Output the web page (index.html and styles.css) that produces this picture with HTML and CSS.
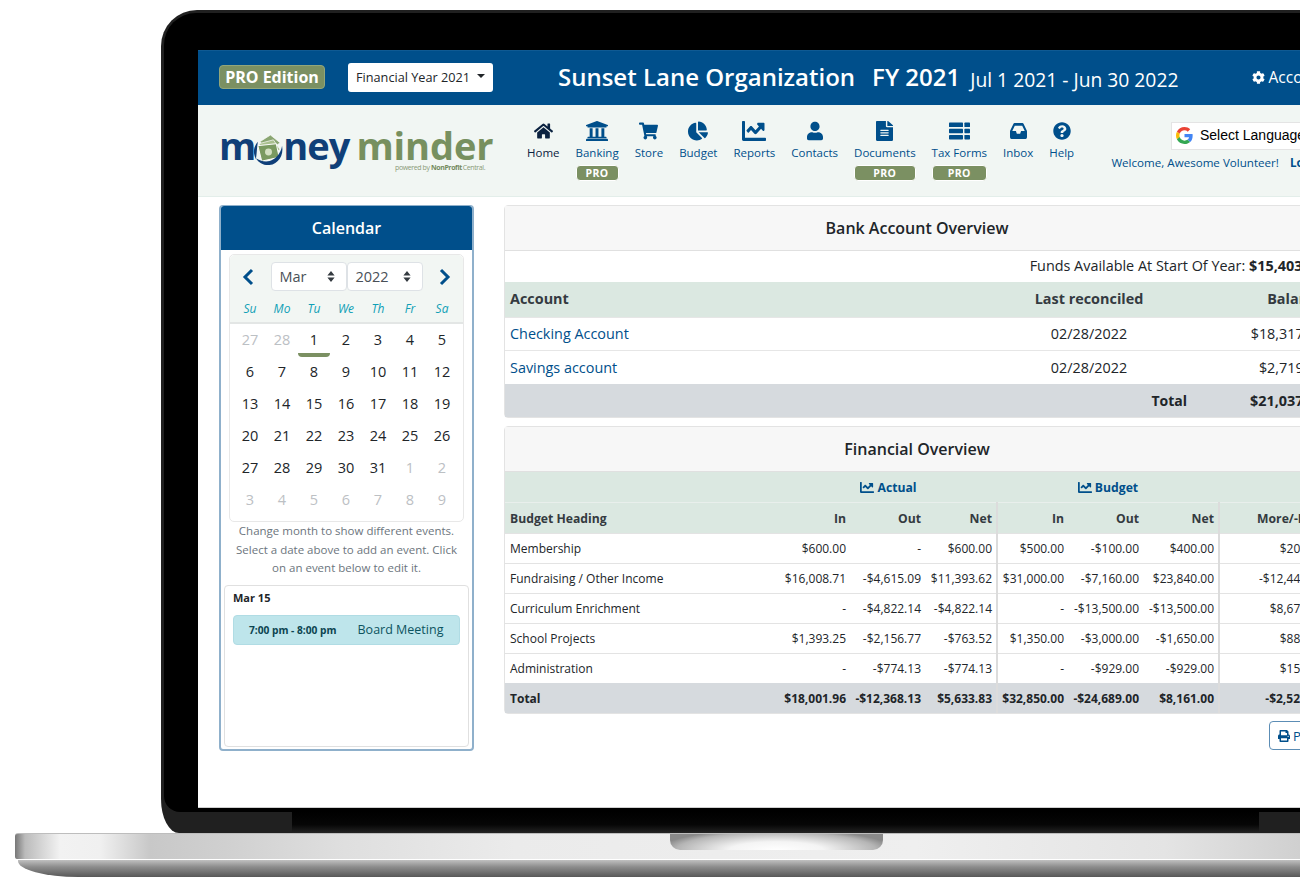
FILE: index.html
```html
<!DOCTYPE html>
<html lang="en">
<head>
<meta charset="utf-8">
<title>Money Minder</title>
<link rel="stylesheet" href="styles.css">
</head>
<body>
<svg class="sprite" aria-hidden="true">
  <symbol id="i-home" viewBox="0 0 576 512"><path d="M280.37 148.26L96 300.11V464a16 16 0 0 0 16 16l112.06-.29a16 16 0 0 0 15.92-16V368a16 16 0 0 1 16-16h64a16 16 0 0 1 16 16v95.64a16 16 0 0 0 16 16.05L464 480a16 16 0 0 0 16-16V300L295.67 148.26a12.19 12.19 0 0 0-15.3 0zM571.6 251.47L488 182.56V44.05a12 12 0 0 0-12-12h-56a12 12 0 0 0-12 12v72.61L318.47 43a48 48 0 0 0-61 0L4.34 251.47a12 12 0 0 0-1.6 16.9l25.5 31A12 12 0 0 0 45.15 301l235.22-193.74a12.19 12.19 0 0 1 15.3 0L530.9 301a12 12 0 0 0 16.9-1.6l25.5-31a12 12 0 0 0-1.7-16.93z"/></symbol>
  <symbol id="i-bank" viewBox="16 32 480 448" preserveAspectRatio="none"><path d="M496 128v16a8 8 0 0 1-8 8h-24v12c0 6.627-5.373 12-12 12H60c-6.627 0-12-5.373-12-12v-12H24a8 8 0 0 1-8-8v-16a8 8 0 0 1 4.941-7.392l232-88a7.996 7.996 0 0 1 6.118 0l232 88A8 8 0 0 1 496 128zm-24 304H40c-13.255 0-24 10.745-24 24v16a8 8 0 0 0 8 8h464a8 8 0 0 0 8-8v-16c0-13.255-10.745-24-24-24zM96 192v192H60c-6.627 0-12 5.373-12 12v20h416v-20c0-6.627-5.373-12-12-12h-36V192h-64v192h-64V192h-64v192h-64V192H96z"/></symbol>
  <symbol id="i-cart" viewBox="0 0 576 512"><path d="M528.12 301.319l47.273-208C578.806 78.301 567.391 64 551.99 64H159.208l-9.166-44.81C147.758 8.021 137.93 0 126.529 0H24C10.745 0 0 10.745 0 24v16c0 13.255 10.745 24 24 24h69.883l70.248 343.435C147.325 417.1 136 435.222 136 456c0 30.928 25.072 56 56 56s56-25.072 56-56c0-15.674-6.447-29.835-16.824-40h209.647C430.447 426.165 424 440.326 424 456c0 30.928 25.072 56 56 56s56-25.072 56-56c0-22.172-12.888-41.332-31.579-50.405l5.517-24.276c3.413-15.018-8.002-29.319-23.403-29.319H218.117l-6.545-32h293.145c11.206 0 20.92-7.754 23.403-18.681z"/></symbol>
  <symbol id="i-pie" viewBox="0 0 544 512"><path d="M527.79 288H290.5l158.03 158.03c6.04 6.04 15.98 6.53 22.19.68 38.7-36.46 65.32-85.61 73.13-140.86 1.34-9.46-6.51-17.85-16.06-17.85zm-15.83-64.8C503.72 103.74 408.26 8.28 288.8.04 279.68-.59 272 7.1 272 16.24V240h223.77c9.14 0 16.82-7.68 16.19-16.8zM224 288V50.71c0-9.55-8.39-17.4-17.84-16.06C86.99 51.49-4.1 155.6.14 280.37 4.5 408.51 114.83 513.59 243.03 511.98c50.4-.63 96.97-16.87 135.26-44.03 7.9-5.6 8.42-17.23 1.57-24.08L224 288z"/></symbol>
  <symbol id="i-line" viewBox="0 64 512 384" preserveAspectRatio="none"><path d="M496 384H64V80c0-8.84-7.16-16-16-16H16C7.16 64 0 71.16 0 80v336c0 17.67 14.33 32 32 32h464c8.84 0 16-7.16 16-16v-32c0-8.84-7.16-16-16-16zM464 96H345.94c-21.38 0-32.09 25.85-16.97 40.97l32.4 32.4L288 242.75l-73.37-73.37c-12.5-12.5-32.76-12.5-45.25 0l-68.69 68.69c-6.25 6.25-6.25 16.38 0 22.63l22.62 22.62c6.25 6.25 16.38 6.25 22.63 0L192 237.25l73.37 73.37c12.5 12.5 32.76 12.5 45.25 0l96-96 32.4 32.4c15.12 15.12 40.97 4.41 40.97-16.97V112c.01-8.84-7.15-16-15.99-16z"/></symbol>
  <symbol id="i-user" viewBox="0 0 448 512"><path d="M224 256c70.7 0 128-57.3 128-128S294.7 0 224 0 96 57.3 96 128s57.3 128 128 128zm89.6 32h-16.7c-22.2 10.2-46.9 16-72.9 16s-50.6-5.8-72.9-16h-16.7C60.2 288 0 348.2 0 422.4V464c0 26.5 21.5 48 48 48h352c26.5 0 48-21.5 48-48v-41.6c0-74.2-60.2-134.4-134.4-134.4z"/></symbol>
  <symbol id="i-file" viewBox="0 0 384 512" preserveAspectRatio="none"><path d="M224 136V0H24C10.7 0 0 10.7 0 24v464c0 13.3 10.7 24 24 24h336c13.3 0 24-10.7 24-24V160H248c-13.2 0-24-10.8-24-24zm64 236c0 6.6-5.4 12-12 12H108c-6.6 0-12-5.4-12-12v-8c0-6.6 5.4-12 12-12h168c6.6 0 12 5.4 12 12v8zm0-64c0 6.6-5.4 12-12 12H108c-6.6 0-12-5.4-12-12v-8c0-6.6 5.4-12 12-12h168c6.6 0 12 5.4 12 12v8zm0-72v8c0 6.6-5.4 12-12 12H108c-6.6 0-12-5.4-12-12v-8c0-6.6 5.4-12 12-12h168c6.6 0 12 5.4 12 12zm96-114.1v6.1H256V0h6.1c6.4 0 12.5 2.5 17 7l97.9 98c4.5 4.5 7 10.6 7 16.9z"/></symbol>
  <symbol id="i-forms" viewBox="0 0 21 17"><rect x="0" y="0" width="14" height="4.600" rx=".7"/><rect x="15.400" y="0" width="5.600" height="4.600" rx=".7"/><rect x="0" y="6.200" width="14" height="4.600" rx=".7"/><rect x="15.400" y="6.200" width="5.600" height="4.600" rx=".7"/><rect x="0" y="12.400" width="14" height="4.600" rx=".7"/><rect x="15.400" y="12.400" width="5.600" height="4.600" rx=".7"/></symbol>
  <symbol id="i-inbox" viewBox="0 64 576 384" preserveAspectRatio="none"><path d="M567.938 243.908L462.25 85.374A48.003 48.003 0 0 0 422.311 64H153.689a48 48 0 0 0-39.938 21.374L8.062 243.908A47.994 47.994 0 0 0 0 270.533V400c0 26.51 21.49 48 48 48h480c26.51 0 48-21.49 48-48V270.533a47.994 47.994 0 0 0-8.062-26.625zM162.252 128h251.497l85.333 128H376l-32 64H232l-32-64H76.918l85.334-128z"/></symbol>
  <symbol id="i-help" viewBox="0 0 512 512"><path d="M504 256c0 136.997-111.043 248-248 248S8 392.997 8 256C8 119.083 119.043 8 256 8s248 111.083 248 248zM262.655 90c-54.497 0-89.255 22.957-116.549 63.758-3.536 5.286-2.353 12.415 2.715 16.258l34.699 26.31c5.205 3.947 12.621 3.008 16.665-2.122 17.864-22.658 30.113-35.797 57.303-35.797 20.429 0 45.698 13.148 45.698 32.958 0 14.976-12.363 22.667-32.534 33.976C247.128 238.528 216 254.941 216 296v4c0 6.627 5.373 12 12 12h56c6.627 0 12-5.373 12-12v-1.333c0-28.462 83.186-29.647 83.186-106.667 0-58.002-60.165-102-116.531-102zM256 338c-25.365 0-46 20.635-46 46 0 25.364 20.635 46 46 46s46-20.636 46-46c0-25.365-20.635-46-46-46z"/></symbol>
  <symbol id="i-cog" viewBox="0 0 512 512"><path d="M487.4 315.7l-42.6-24.6c4.3-23.2 4.3-47 0-70.2l42.6-24.6c4.9-2.8 7.1-8.6 5.5-14-11.1-35.6-30-67.8-54.7-94.6-3.8-4.1-10-5.1-14.8-2.3L380.8 110c-17.9-15.4-38.5-27.3-60.8-35.1V25.8c0-5.6-3.9-10.5-9.4-11.7-36.7-8.2-74.3-7.8-109.2 0-5.5 1.2-9.4 6.1-9.4 11.7V75c-22.2 7.9-42.8 19.8-60.8 35.1L88.7 85.5c-4.9-2.8-11-1.9-14.8 2.3-24.7 26.7-43.6 58.9-54.7 94.6-1.7 5.4.6 11.2 5.5 14L67.3 221c-4.3 23.2-4.3 47 0 70.2l-42.6 24.6c-4.9 2.8-7.1 8.6-5.5 14 11.1 35.6 30 67.8 54.7 94.6 3.8 4.1 10 5.1 14.8 2.3l42.6-24.6c17.9 15.4 38.5 27.3 60.8 35.1v49.2c0 5.6 3.9 10.5 9.4 11.7 36.7 8.2 74.3 7.8 109.2 0 5.5-1.2 9.4-6.1 9.4-11.7v-49.2c22.2-7.9 42.8-19.8 60.8-35.1l42.6 24.6c4.9 2.8 11 1.9 14.8-2.3 24.7-26.7 43.6-58.9 54.7-94.6 1.5-5.5-.7-11.3-5.6-14.1zM256 336c-44.1 0-80-35.9-80-80s35.9-80 80-80 80 35.9 80 80-35.9 80-80 80z"/></symbol>
  <symbol id="i-print" viewBox="0 0 512 512"><path d="M448 192V77.25c0-8.49-3.37-16.62-9.37-22.63L393.37 9.37c-6-6-14.14-9.37-22.63-9.37H96C78.33 0 64 14.33 64 32v160c-35.35 0-64 28.65-64 64v112c0 8.84 7.16 16 16 16h48v96c0 17.67 14.33 32 32 32h320c17.67 0 32-14.33 32-32v-96h48c8.84 0 16-7.16 16-16V256c0-35.35-28.65-64-64-64zm-64 256H128v-96h256v96zm0-224H128V64h192v48c0 8.84 7.16 16 16 16h48v96zm48 72c-13.25 0-24-10.75-24-24 0-13.26 10.75-24 24-24s24 10.74 24 24c0 13.25-10.75 24-24 24z"/></symbol>
  <symbol id="i-sort" viewBox="0 0 10 14"><path d="M5 0l4.600 5.600H.4zM5 14L.4 8.400h9.200z"/></symbol>
</svg>

<div class="stage">
  <div class="lid">
    <div class="bezel">
      <div class="screen">
        <header class="topbar">
          <span class="edition">PRO Edition</span>
          <button class="year-btn">Financial Year 2021<span class="caret"></span></button>
          <h1 class="org">Sunset Lane Organization<span class="org-fy">FY 2021</span><span class="org-dates">Jul 1 2021 - Jun 30 2022</span></h1>
          <a class="account"><svg class="ic-cog"><use href="#i-cog"/></svg>Account</a>
        </header>

        <nav class="navbar">
          <div class="logo">
            <div class="logo-word"><span class="logo-blue">m</span><svg class="logo-o" viewBox="0 0 32 34"><path d="M7 8L18 1l10 8-11 8z" fill="#8aa672" stroke="#fff" stroke-width=".7"/><path d="M6 10l15-4 7 10-14 7z" fill="#a9c08e" stroke="#fff" stroke-width=".7"/><path d="M5 12l19-2 3 14-18 4z" fill="#7a9a60" stroke="#fff" stroke-width="1"/><circle cx="16" cy="18.500" r="3.600" fill="#d3e0c2"/><path d="M30 12c2 10-4 19-13 20-6 .5-11-2-14-7 5 3 12 5 18 1 5-3 8-8 9-14z" fill="#0f3f78"/><path d="M3 26C0 20 0 14 5 8c-1 6-1 12-2 18z" fill="#0f3f78"/></svg><span class="logo-blue">ney</span><span class="logo-green">minder</span></div>
            <div class="logo-sub">powered by <b>NonProfit</b>Central.</div>
          </div>
          <ul class="navlinks">
            <li class="navitem active"><svg class="nav-ic w-home"><use href="#i-home"/></svg><span>Home</span></li>
            <li class="navitem"><svg class="nav-ic w-bank"><use href="#i-bank"/></svg><span>Banking</span><em class="pro">PRO</em></li>
            <li class="navitem"><svg class="nav-ic w-cart"><use href="#i-cart"/></svg><span>Store</span></li>
            <li class="navitem"><svg class="nav-ic w-pie"><use href="#i-pie"/></svg><span>Budget</span></li>
            <li class="navitem"><svg class="nav-ic w-line"><use href="#i-line"/></svg><span>Reports</span></li>
            <li class="navitem"><svg class="nav-ic w-user"><use href="#i-user"/></svg><span>Contacts</span></li>
            <li class="navitem"><svg class="nav-ic w-file"><use href="#i-file"/></svg><span>Documents</span><em class="pro">PRO</em></li>
            <li class="navitem"><svg class="nav-ic w-forms"><use href="#i-forms"/></svg><span>Tax Forms</span><em class="pro">PRO</em></li>
            <li class="navitem"><svg class="nav-ic w-inbox"><use href="#i-inbox"/></svg><span>Inbox</span></li>
            <li class="navitem"><svg class="nav-ic w-help"><use href="#i-help"/></svg><span>Help</span></li>
          </ul>
          <div class="navright">
            <div class="translate">
              <svg class="g-logo" viewBox="0 0 48 48"><path fill="#EA4335" d="M24 9.500c3.500 0 6.700 1.200 9.200 3.600l6.900-6.900C35.900 2.400 30.500 0 24 0 14.600 0 6.500 5.400 2.600 13.200l8 6.200C12.400 13.700 17.700 9.500 24 9.500z"/><path fill="#4285F4" d="M47 24.500c0-1.600-.2-3.100-.4-4.500H24v9h12.900c-.6 3-2.200 5.500-4.700 7.200l7.700 6C44.400 38.600 47 32.100 47 24.500z"/><path fill="#FBBC05" d="M10.500 28.600c-.5-1.400-.8-3-.8-4.600s.3-3.200.8-4.600l-8-6.200C.9 16.500 0 20.100 0 24s.9 7.500 2.600 10.800l7.900-6.200z"/><path fill="#34A853" d="M24 48c6.500 0 11.900-2.100 15.900-5.800l-7.700-6c-2.200 1.500-4.900 2.300-8.200 2.300-6.300 0-11.600-4.200-13.500-10l-8 6.200C6.500 42.600 14.600 48 24 48z"/></svg>
              <span>Select Language</span>
            </div>
            <div class="welcome">Welcome, Awesome Volunteer!<a class="logout">Logout</a></div>
          </div>
        </nav>

        <main class="content">
          <aside class="cal-card">
            <h2 class="cal-head">Calendar</h2>
            <div class="cal-widget">
              <div class="cal-top">
                <div class="cal-controls">
                  <svg class="chev" viewBox="0 0 12 18"><path d="M10 2L3 9l7 7"/></svg>
                  <div class="cal-selects">
                    <span class="cal-sel">Mar<svg class="sort"><use href="#i-sort"/></svg></span>
                    <span class="cal-sel">2022<svg class="sort"><use href="#i-sort"/></svg></span>
                  </div>
                  <svg class="chev" viewBox="0 0 12 18"><path d="M2 2l7 7-7 7"/></svg>
                </div>
                <div class="cal-dow"><span>Su</span><span>Mo</span><span>Tu</span><span>We</span><span>Th</span><span>Fr</span><span>Sa</span></div>
              </div>
              <div class="cal-days">
                <span class="off">27</span><span class="off">28</span><span class="today">1</span><span>2</span><span>3</span><span>4</span><span>5</span>
                <span>6</span><span>7</span><span>8</span><span>9</span><span>10</span><span>11</span><span>12</span>
                <span>13</span><span>14</span><span>15</span><span>16</span><span>17</span><span>18</span><span>19</span>
                <span>20</span><span>21</span><span>22</span><span>23</span><span>24</span><span>25</span><span>26</span>
                <span>27</span><span>28</span><span>29</span><span>30</span><span>31</span><span class="off">1</span><span class="off">2</span>
                <span class="off">3</span><span class="off">4</span><span class="off">5</span><span class="off">6</span><span class="off">7</span><span class="off">8</span><span class="off">9</span>
              </div>
            </div>
            <p class="cal-help">Change month to show different events. Select a date above to add an event. Click on an event below to edit it.</p>
            <div class="events">
              <div class="ev-date">Mar 15</div>
              <div class="ev-pill"><b>7:00 pm - 8:00 pm</b><span>Board Meeting</span></div>
            </div>
          </aside>

          <section class="right-col">
            <div class="card">
              <h2 class="card-title">Bank Account Overview</h2>
              <div class="funds">Funds Available At Start Of Year: <b>$15,403.73</b></div>
              <table class="bank">
                <colgroup><col class="b1"><col class="b2"><col class="b3"></colgroup>
                <thead><tr><th class="l">Account</th><th class="c">Last reconciled</th><th class="r">Balance</th></tr></thead>
                <tbody>
                  <tr><td class="l"><a class="acct">Checking Account</a></td><td class="c">02/28/2022</td><td class="r">$18,317.71</td></tr>
                  <tr><td class="l"><a class="acct">Savings account</a></td><td class="c">02/28/2022</td><td class="r">$2,719.85</td></tr>
                </tbody>
                <tfoot><tr><td></td><td class="r tot-l">Total</td><td class="r">$21,037.56</td></tr></tfoot>
              </table>
            </div>

            <div class="card card-fin">
              <h2 class="card-title">Financial Overview</h2>
              <table class="fin">
                <colgroup><col class="f0"><col class="f1"><col class="f2"><col class="f3"><col class="f4"><col class="f5"><col class="f6"><col class="f7"></colgroup>
                <thead>
                  <tr class="group"><th></th><th colspan="3"><svg class="ic-line"><use href="#i-line"/></svg>Actual</th><th colspan="3"><svg class="ic-line"><use href="#i-line"/></svg>Budget</th><th></th></tr>
                  <tr class="heads"><th class="l">Budget Heading</th><th>In</th><th>Out</th><th class="sep">Net</th><th>In</th><th>Out</th><th class="sep">Net</th><th>More/-Less</th></tr>
                </thead>
                <tbody>
                  <tr><td class="l">Membership</td><td>$600.00</td><td>-</td><td class="sep">$600.00</td><td>$500.00</td><td>-$100.00</td><td class="sep">$400.00</td><td>$200.00</td></tr>
                  <tr><td class="l">Fundraising / Other Income</td><td>$16,008.71</td><td>-$4,615.09</td><td class="sep">$11,393.62</td><td>$31,000.00</td><td>-$7,160.00</td><td class="sep">$23,840.00</td><td>-$12,446.38</td></tr>
                  <tr><td class="l">Curriculum Enrichment</td><td>-</td><td>-$4,822.14</td><td class="sep">-$4,822.14</td><td>-</td><td>-$13,500.00</td><td class="sep">-$13,500.00</td><td>$8,677.86</td></tr>
                  <tr><td class="l">School Projects</td><td>$1,393.25</td><td>-$2,156.77</td><td class="sep">-$763.52</td><td>$1,350.00</td><td>-$3,000.00</td><td class="sep">-$1,650.00</td><td>$886.48</td></tr>
                  <tr><td class="l">Administration</td><td>-</td><td>-$774.13</td><td class="sep">-$774.13</td><td>-</td><td>-$929.00</td><td class="sep">-$929.00</td><td>$154.87</td></tr>
                </tbody>
                <tfoot><tr><td class="l">Total</td><td>$18,001.96</td><td>-$12,368.13</td><td class="sep">$5,633.83</td><td>$32,850.00</td><td>-$24,689.00</td><td class="sep">$8,161.00</td><td>-$2,527.17</td></tr></tfoot>
              </table>
            </div>

            <div class="actions"><button class="print-btn"><svg class="ic-print"><use href="#i-print"/></svg>Print</button></div>
          </section>
        </main>
      </div>
    </div>
    <div class="hinge"></div>
  </div>
  <div class="base">
    <div class="base-top"><div class="notch"></div></div>
    <div class="base-low"></div>
  </div>
</div>
</body>
</html>
```

FILE: styles.css
```css
* { box-sizing: border-box; }
html, body { margin: 0; padding: 0; background: #fff; }
body { font-family: "Open Sans", "Noto Sans", sans-serif; color: #212529; }
.sprite { display: none; }
h1, h2, p, ul { margin: 0; padding: 0; }

.stage { width: 1300px; height: 896px; overflow: hidden; padding-top: 10px; }

/* laptop */
.lid { margin-left: 161px; width: 1300px; height: 823px; background: #202020; border-radius: 36px 0 0 18px / 36px 0 0 34px; padding: 3px 0 0 3px; }
.bezel { width: 100%; height: 799px; background: #000; border-radius: 32px 0 0 16px; padding: 37px 0 0 34px; }
.screen { width: 1153px; height: 758px; background: #fff; overflow: hidden; border-bottom: 1px solid #cfcfcf; }
.hinge { margin-left: 128px; width: 967px; height: 21px; background: linear-gradient(#000, #060606 60%, #232323); }

.base { margin-left: 15px; width: 1400px; }
.base-top { height: 27px; border-top: 1px solid #bdbdbd; border-radius: 3px 0 0 3px; background: linear-gradient(90deg, #777 0, #bbb 10px, #f2f2f2 45px, #f0f0f0 85px, #c8c8c8 135px, #d0d0d0 210px, #dfdfdf 330px, #ebebeb 500px, #efefef 900px, #e4e4e4 1150px, #d0d0d0 1285px); border-bottom: 1px solid #fff; }
.notch { margin-left: 655px; width: 213px; height: 16px; border-radius: 0 0 10px 10px; background: radial-gradient(ellipse 55% 130% at 50% 100%, #fff 0, #f4f4f4 40%, #b5b5b5 85%, #8a8a8a 100%); }
.base-low { margin-left: 3px; height: 17px; border-radius: 0 0 0 60px / 0 0 0 16px; background: linear-gradient(#c0c0c0, #8d8d8d 40%, #585858); }

/* top bar */
.topbar { height: 55px; background: #004f8b; padding: 0 21px 2px; display: flex; align-items: center; color: #fff; border-top: 1px solid #0f5a93; }
.edition { flex: none; width: 106px; height: 24px; background: #7b9062; border: 1px solid #92a67a; border-radius: 4px; font-size: 16px; font-weight: 700; line-height: 22px; text-align: center; color: #fff; }
.year-btn { flex: none; margin-left: 23px; width: 145px; height: 29px; background: #fff; border: 0; border-radius: 3px; font: 400 12.700px "Open Sans", sans-serif; color: #212529; padding: 0; display: flex; align-items: center; justify-content: center; }
.caret { margin-left: 7px; width: 0; height: 0; border: 4px solid transparent; border-top-color: #212529; border-bottom: 0; margin-top: -2px; }
.org { flex: none; margin-left: 65px; font-size: 24px; font-weight: 600; white-space: nowrap; line-height: 32px; display: flex; align-items: center; }
.org-fy { margin-left: 17px; }
.org-dates { margin-left: 10px; margin-top: 6px; font-size: 19.300px; font-weight: 400; }
.account { margin-left: auto; padding-right: 3px; font-size: 15.500px; display: flex; align-items: center; color: #fff; }
.ic-cog { width: 13px; height: 13px; fill: #fff; margin-right: 3px; }

/* nav */
.navbar { height: 92px; background: #f1f6f3; border-bottom: 1px solid #e3eeea; padding: 0 21px; display: flex; }
.logo { flex: none; width: 308px; padding-top: 18px; }
.logo-word { display: flex; align-items: baseline; font-size: 38px; line-height: 44px; font-weight: 700; height: 41px; white-space: nowrap; }
.logo-blue { color: #0f3f78; letter-spacing: -1px; }
.logo-green { color: #77905f; margin-left: 7px; letter-spacing: -.1px; font-weight: 700; }
.logo-o { width: 31px; height: 33px; margin: 0 -1px -3px -2px; align-self: flex-end; }
.logo-sub { margin-left: 176px; margin-top: -1px; font-size: 7px; line-height: 10px; color: #8a9a78; white-space: nowrap; letter-spacing: -.4px; }
.logo-sub b { color: #748a5e; margin-right: 1px; }
.navlinks { flex: none; list-style: none; display: flex; gap: 16px; padding-top: 16px; }
.navitem { display: flex; flex-direction: column; align-items: stretch; text-align: center; font-size: 11.500px; line-height: 16px; color: #004f8b; white-space: nowrap; }
.navitem.active { color: #0b2240; }
.nav-ic { display: block; height: 20px; fill: currentColor; margin: 0 auto 4px; }
.w-home { width: 19px; } .w-bank { width: 22px; } .w-cart { width: 19px; } .w-pie { width: 20px; } .w-line { width: 24px; } .w-user { width: 16px; } .w-file { width: 17px; } .w-forms { width: 21px; } .w-help { width: 18px; }
.w-inbox { width: 17px; height: 16px; margin-top: 2px; margin-bottom: 6px; }
.pro { margin-top: 4px; height: 16px; background: #7b9062; border: 1px solid #fff; border-radius: 4px; font-style: normal; font-size: 10.500px; font-weight: 700; line-height: 14px; letter-spacing: .4px; color: #fff; }
.navright { margin-left: auto; display: flex; flex-direction: column; align-items: flex-end; padding-top: 17px; }
.translate { width: 159px; height: 28px; background: #fff; border: 1px solid #e4e4e4; display: flex; align-items: center; padding: 0 0 2px 4px; font: 400 14px "Liberation Sans", Arial, sans-serif; color: #000; white-space: nowrap; }
.g-logo { flex: none; width: 17px; height: 17px; margin-right: 7px; }
.welcome { margin-top: 5px; font-size: 11.600px; line-height: 16px; color: #004f8b; white-space: nowrap; }
.logout { margin-left: 11px; font-weight: 700; }

/* main */
.content { display: flex; gap: 30px; padding: 8px 21px 0; align-items: flex-start; }

.cal-card { flex: none; width: 255px; height: 546px; border-style: solid; border-width: 1px 2px 2px; border-color: #8fb0cb; border-radius: 4px; padding: 0 3px; }
.cal-head { margin: 0 -3px; height: 44px; background: #004f8b; color: #fff; font-size: 16px; font-weight: 600; line-height: 44px; text-align: center; border-radius: 3px 3px 0 0; }
.cal-widget { margin: 4px 5px 0; height: 268px; border: 1px solid #e8e8e8; border-radius: 5px; background: #fff; }
.cal-top { height: 69px; background: #f2f6f3; border-bottom: 2px solid #e3e6e5; border-radius: 5px 5px 0 0; padding-top: 7px; }
.cal-controls { display: flex; align-items: center; justify-content: space-between; padding: 0 12px; height: 29px; }
.chev { width: 12px; height: 18px; fill: none; stroke: #004f8b; stroke-width: 3; }
.cal-selects { display: flex; }
.cal-sel { width: 76px; height: 29px; background: #fff; border: 1px solid #dee2e6; border-radius: 4px; font-size: 14.500px; line-height: 27px; color: #495057; padding-left: 8px; display: flex; justify-content: space-between; align-items: center; padding-right: 11px; }
.sort { width: 8px; height: 11px; fill: #343a40; }
.cal-dow { display: grid; grid-template-columns: repeat(7, 32px); padding: 9px 0 0 4px; font-size: 12px; line-height: 18px; font-style: italic; color: #0f9fb6; text-align: center; }
.cal-days { display: grid; grid-template-columns: repeat(7, 32px); grid-auto-rows: 32px; padding: 0 0 0 4px; font-size: 14.500px; line-height: 32px; text-align: center; color: #212529; }
.off { color: #bcc0c4; }
.today { position: relative; }
.today::after { content: ""; position: absolute; left: 0; right: 0; bottom: -1px; height: 4px; background: #7b9062; border-radius: 0 0 5px 5px; }
.cal-help { margin: 0 4px; font-size: 11.500px; line-height: 18.500px; text-align: center; color: #6c757d; }
.events { margin-top: 7px; height: 162px; border: 1px solid #e0e0e0; border-radius: 4px; padding: 5px 8px; }
.ev-date { font-size: 11px; font-weight: 700; line-height: 13px; color: #212529; }
.ev-pill { margin-top: 11px; height: 30px; background: #bee5eb; border: 1px solid #b0dce4; border-radius: 4px; display: flex; align-items: center; color: #0c5460; }
.ev-pill b { margin-left: 15px; font-size: 10.200px; color: #0c4450; }
.ev-pill span { margin-left: 21px; font-size: 12.500px; }

.right-col { flex: none; width: 826px; }
.card { border: 1px solid #e3e3e3; border-radius: 4px 0 0 4px; }
.card-fin { margin-top: 8px; }
.card-title { height: 45px; background: #f7f7f7; border-bottom: 1px solid #e0e0e0; font-size: 16px; font-weight: 600; line-height: 45px; text-align: center; color: #212529; }
.funds { height: 31px; padding-right: 6px; text-align: right; font-size: 14.400px; line-height: 30px; color: #212529; white-space: nowrap; }
table { border-collapse: collapse; width: 825px; table-layout: fixed; }
th, td { padding: 0; white-space: nowrap; }

.bank { font-size: 14.400px; }
.b1 { width: 470px; } .b2 { width: 228px; } .b3 { width: 127px; }
.bank th { height: 35px; background: #dbe8e1; font-weight: 700; color: #343a40; padding-bottom: 2px; }
.bank td { height: 33.500px; border-top: 1px solid #e6e6e6; }
.bank tfoot td { height: 33px; background: #d6dade; font-weight: 700; border-top: 0; }
.bank .r { padding-right: 6px; }
.bank .tot-l { padding-right: 16px; font-size: 14px; }
.l { text-align: left; padding-left: 5px; }
.c { text-align: center; }
.r { text-align: right; }
.acct { color: #004f8b; }

.fin { font-size: 12px; }
.f0 { width: 275px; } .f1 { width: 72px; } .f2 { width: 75px; } .f3 { width: 70px; } .f4 { width: 73px; } .f5 { width: 75px; } .f6 { width: 74px; } .f7 { width: 111px; }
.fin th { height: 31px; background: #dbe8e1; font-size: 12.200px; font-weight: 700; text-align: right; padding: 1px 6px 0 0; color: #343a40; }
.fin th.l, .fin td.l { text-align: left; padding-left: 5px; padding-right: 0; }
.fin .group th { height: 30px; text-align: center; color: #004f8b; padding: 1px 0 0; border-bottom: 1px solid #e9efec; }
.ic-line { width: 14px; height: 11px; fill: #004f8b; margin-right: 3px; vertical-align: -1px; }
.fin td { height: 30px; text-align: right; padding-right: 6px; border-top: 1px solid #e3e3e3; color: #212529; }
.fin tfoot td { background: #d6dade; font-weight: 700; border-top: 0; }
.fin .sep { border-right: 2px solid #dcdcdc; padding-right: 4px; }
.actions { display: flex; justify-content: flex-end; margin-top: 7px; }
.print-btn { width: 61px; height: 29px; background: #fff; border: 1px solid #5c8db5; border-radius: 4px; font: 400 13px "Open Sans", sans-serif; color: #004f8b; display: flex; align-items: center; padding: 0 0 0 8px; }
.ic-print { width: 12px; height: 12px; fill: #004f8b; margin-right: 3px; }
```
